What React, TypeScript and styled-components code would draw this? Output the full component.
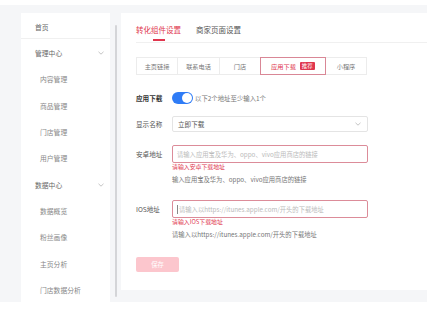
import React from 'react'
import styled, { createGlobalStyle } from 'styled-components'

const GlobalStyle = createGlobalStyle`
    html, body {
        margin: 0;
        padding: 0;
        background: #ffffff;
    }
    * {
        box-sizing: border-box;
    }
`

const RED = '#e0364e'

const Page = styled.div`
    width: 427px;
    height: 312px;
    overflow: hidden;
    display: flex;
    flex-direction: column;
    background: #ffffff;
    font-family: 'Noto Sans CJK SC', 'Noto Sans', sans-serif;
    color: #555;
`

const TopStrip = styled.div`
    height: 5px;
    background: #ffffff;
    flex-shrink: 0;
`

const Workspace = styled.div`
    height: 297px;
    flex-shrink: 0;
    display: flex;
    align-items: flex-start;
    background: #f5f6f8;
    padding: 8px 0 0 21px;
`

const Sidebar = styled.nav`
    width: 89px;
    height: 289px;
    background: #ffffff;
    display: flex;
    flex-direction: column;
    padding-top: 2px;
`

const HomeItem = styled.div`
    height: 27px;
    display: flex;
    align-items: center;
    padding-left: 14px;
    font-size: 6.8px;
    color: #666;
    border-bottom: 1px solid #f0f0f0;
`

const MenuItem = styled.div<{ $sub?: boolean }>`
    height: 26.3px;
    flex-shrink: 0;
    display: flex;
    align-items: center;
    justify-content: space-between;
    padding-left: ${(p) => (p.$sub ? 19 : 14)}px;
    padding-right: 6px;
    padding-top: 2px;
    font-size: 6.8px;
    color: ${(p) => (p.$sub ? '#888' : '#666')};
`

const Chevron = styled.svg`
    width: 6px;
    height: 4px;
`

const ScrollTrack = styled.div`
    width: 11px;
    height: 289px;
    display: flex;
    justify-content: center;
    padding-top: 12px;
`

const ScrollThumb = styled.div`
    width: 2px;
    height: 272px;
    background: #d4d5d8;
    border-radius: 1px;
`

const MainCard = styled.main`
    flex: 1;
    height: 277px;
    background: #ffffff;
    padding: 0 0 0 15px;
    display: flex;
    flex-direction: column;
`

const TabBar = styled.div`
    height: 30px;
    display: flex;
    align-items: stretch;
    gap: 15px;
    border-bottom: 1px solid #f0f0f0;
`

const Tab = styled.div<{ $active?: boolean }>`
    position: relative;
    display: flex;
    align-items: center;
    padding-top: 4px;
    font-size: 7.5px;
    color: ${(p) => (p.$active ? RED : '#555')};

    &::after {
        content: '';
        display: ${(p) => (p.$active ? 'block' : 'none')};
        position: absolute;
        left: 50%;
        bottom: 1px;
        width: 12px;
        height: 2px;
        margin-left: -6px;
        background: ${RED};
    }
`

const Segments = styled.div`
    margin-top: 14px;
    display: flex;
    height: 18px;
`

const Segment = styled.div<{ $width: number; $active?: boolean }>`
    width: ${(p) => p.$width}px;
    display: flex;
    align-items: center;
    justify-content: center;
    gap: 4px;
    font-size: 6.2px;
    color: ${(p) => (p.$active ? RED : '#777')};
    border: 1px solid ${(p) => (p.$active ? '#d98796' : '#ececec')};
    margin-left: -1px;
    position: relative;
    z-index: ${(p) => (p.$active ? 1 : 0)};
    background: #ffffff;

    &:first-child {
        margin-left: 0;
    }
`

const Badge = styled.span`
    background: ${RED};
    color: #ffffff;
    font-size: 5.5px;
    line-height: 8px;
    padding: 0 2px;
    border-radius: 1px;
`

const Form = styled.div`
    margin-top: 17px;
    display: flex;
    flex-direction: column;
`

const Row = styled.div<{ $mt?: number }>`
    display: flex;
    align-items: flex-start;
    margin-top: ${(p) => p.$mt ?? 0}px;
`

const Label = styled.div<{ $bold?: boolean; $h: number }>`
    width: 36px;
    height: ${(p) => p.$h}px;
    display: flex;
    align-items: center;
    font-size: 6.6px;
    color: ${(p) => (p.$bold ? '#333' : '#555')};
    font-weight: ${(p) => (p.$bold ? 700 : 400)};
    flex-shrink: 0;
`

const Control = styled.div`
    width: 196px;
    display: flex;
    flex-direction: column;
`

const SwitchLine = styled.div`
    height: 12px;
    display: flex;
    align-items: center;
    gap: 2px;
    font-size: 6.4px;
    color: #777;
`

const Switch = styled.div`
    width: 21px;
    height: 12px;
    border-radius: 6px;
    background: #2f7cf6;
    display: flex;
    align-items: center;
    justify-content: flex-end;
    padding-right: 1px;
`

const Knob = styled.div`
    width: 10px;
    height: 10px;
    border-radius: 50%;
    background: #ffffff;
`

const SelectBox = styled.div`
    height: 16px;
    border: 1px solid #e4e4e4;
    border-radius: 2px;
    display: flex;
    align-items: center;
    justify-content: space-between;
    padding: 0 6px 0 5px;
    font-size: 6.6px;
    color: #555;
`

const InputBox = styled.div`
    height: 18px;
    border: 1px solid #dc8c99;
    border-radius: 2px;
    display: flex;
    align-items: center;
    padding-left: 4px;
    font-size: 6.3px;
    color: #bbb;
    white-space: nowrap;
`

const Caret = styled.span`
    width: 1px;
    height: 9px;
    background: #888;
    margin-right: 1px;
`

const ErrorText = styled.div`
    font-size: 5.9px;
    line-height: 7px;
    color: ${RED};
`

const HintText = styled.div`
    font-size: 6.3px;
    line-height: 8px;
    margin-top: 6px;
    color: #777;
    white-space: nowrap;
`

const SaveButton = styled.button`
    margin-top: 18px;
    width: 43px;
    height: 15px;
    border: none;
    border-radius: 2px;
    background: #fcc6cd;
    color: #ffffff;
    font-family: inherit;
    font-size: 6.3px;
    padding: 0;
`

const BottomStrip = styled.div`
    flex: 1;
    background: #ffffff;
`

const DownChevron = () => (
    <Chevron viewBox="0 0 6 4">
        <path d="M0.5 0.8 L3 3.2 L5.5 0.8" fill="none" stroke="#aaa" strokeWidth="0.7" />
    </Chevron>
)

const segments = [
    { label: '主页链接', width: 42 },
    { label: '联系电话', width: 43 },
    { label: '门店', width: 42 },
    { label: '应用下载', width: 66, active: true, badge: '推荐' },
    { label: '小程序', width: 42 },
]

const menu: { label: string; group?: boolean }[] = [
    { label: '管理中心', group: true },
    { label: '内容管理' },
    { label: '商品管理' },
    { label: '门店管理' },
    { label: '用户管理' },
    { label: '数据中心', group: true },
    { label: '数据概览' },
    { label: '粉丝画像' },
    { label: '主页分析' },
    { label: '门店数据分析' },
]

export default function App() {
    return (
        <>
            <GlobalStyle />
            <Page>
                <TopStrip />
                <Workspace>
                    <Sidebar>
                        <HomeItem>首页</HomeItem>
                        {menu.map((m) => (
                            <MenuItem key={m.label} $sub={!m.group}>
                                <span>{m.label}</span>
                                {m.group && <DownChevron />}
                            </MenuItem>
                        ))}
                    </Sidebar>
                    <ScrollTrack>
                        <ScrollThumb />
                    </ScrollTrack>
                    <MainCard>
                        <TabBar>
                            <Tab $active>转化组件设置</Tab>
                            <Tab>商家页面设置</Tab>
                        </TabBar>
                        <Segments>
                            {segments.map((s) => (
                                <Segment key={s.label} $width={s.width} $active={s.active}>
                                    {s.label}
                                    {s.badge && <Badge>{s.badge}</Badge>}
                                </Segment>
                            ))}
                        </Segments>
                        <Form>
                            <Row>
                                <Label $bold $h={12}>应用下载</Label>
                                <SwitchLine>
                                    <Switch>
                                        <Knob />
                                    </Switch>
                                    以下2个地址至少输入1个
                                </SwitchLine>
                            </Row>
                            <Row $mt={12}>
                                <Label $h={16}>显示名称</Label>
                                <Control>
                                    <SelectBox>
                                        立即下载
                                        <DownChevron />
                                    </SelectBox>
                                </Control>
                            </Row>
                            <Row $mt={13}>
                                <Label $h={18}>安卓地址</Label>
                                <Control>
                                    <InputBox>请输入应用宝及华为、oppo、vivo应用商店的链接</InputBox>
                                    <ErrorText>请输入安卓下载地址</ErrorText>
                                    <HintText>输入应用宝及华为、oppo、vivo应用商店的链接</HintText>
                                </Control>
                            </Row>
                            <Row $mt={16}>
                                <Label $h={18}>IOS地址</Label>
                                <Control>
                                    <InputBox>
                                        <Caret />
                                        请输入以https://itunes.apple.com/开头的下载地址
                                    </InputBox>
                                    <ErrorText>请输入IOS下载地址</ErrorText>
                                    <HintText>请输入以https://itunes.apple.com/开头的下载地址</HintText>
                                </Control>
                            </Row>
                        </Form>
                        <div>
                            <SaveButton>保存</SaveButton>
                        </div>
                    </MainCard>
                </Workspace>
                <BottomStrip />
            </Page>
        </>
    )
}
